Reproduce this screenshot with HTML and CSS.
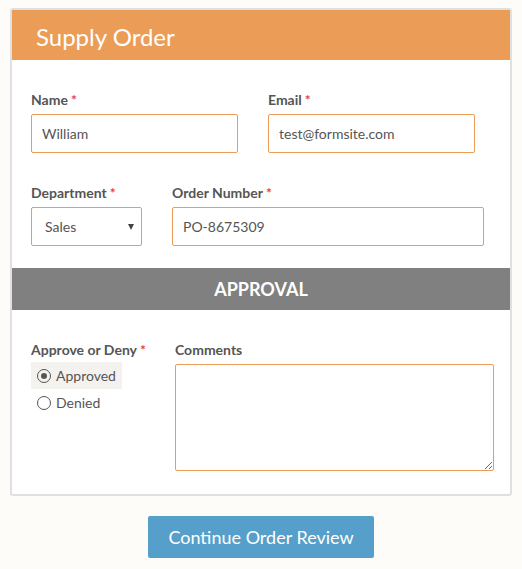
FILE: index.html
```html
<!DOCTYPE html>
<html lang="en">
<head>
    <meta charset="UTF-8">
    <meta name="viewport" content="width=device-width, initial-scale=1.0">
    <title>Supply Order</title>
    <link rel="stylesheet" href="styles.css">
</head>
<body>
    <form class="order-card">
        <h1 class="order-title">Supply Order</h1>

        <div class="order-fields">
            <div class="field-row">
                <div class="field field-name">
                    <label>Name<span class="req">*</span></label>
                    <input type="text" value="William">
                </div>
                <div class="field field-email">
                    <label>Email<span class="req">*</span></label>
                    <input type="text" value="test@formsite.com">
                </div>
            </div>
            <div class="field-row">
                <div class="field field-dept">
                    <label>Department<span class="req">*</span></label>
                    <div class="select-wrap">
                        <select>
                            <option>Sales</option>
                            <option>Marketing</option>
                            <option>Support</option>
                        </select>
                    </div>
                </div>
                <div class="field field-order">
                    <label>Order Number<span class="req">*</span></label>
                    <input type="text" value="PO-8675309">
                </div>
            </div>
        </div>

        <div class="section-bar">APPROVAL</div>

        <div class="approval-fields">
            <div class="field field-approve">
                <label>Approve or Deny<span class="req">*</span></label>
                <div class="radio-list">
                    <label class="radio-item selected"><input type="radio" name="approve" checked> Approved</label>
                    <label class="radio-item"><input type="radio" name="approve"> Denied</label>
                </div>
            </div>
            <div class="field field-comments">
                <label>Comments</label>
                <textarea></textarea>
            </div>
        </div>
    </form>

    <div class="actions">
        <button type="button" class="btn-continue">Continue Order Review</button>
    </div>
</body>
</html>
```

FILE: styles.css
```css
body {
    margin: 0;
    padding: 8px 10px;
    background: #fdfcf8;
    font-family: Lato, "Open Sans", sans-serif;
    color: #555;
}
.order-card {
    border: 2px solid #e0e0e0;
    border-radius: 3px;
    background: #fff;
}
.order-title {
    box-sizing: border-box;
    margin: 0;
    height: 50px;
    padding: 4px 0 0 24px;
    line-height: 46px;
    background: #eb9c56;
    color: #fff;
    font-size: 24px;
    font-weight: normal;
}
.order-fields {
    padding: 31px 19px 0;
    display: flex;
    flex-direction: column;
    gap: 31px;
}
.field-row {
    display: flex;
    gap: 30px;
}
.field label {
    display: block;
    font-size: 14px;
    font-weight: bold;
    line-height: 17px;
    margin-bottom: 6px;
}
.req {
    color: #e8413f;
    margin-left: 3px;
}
.field input[type="text"],
.field select,
.field textarea {
    box-sizing: border-box;
    width: 100%;
    height: 39px;
    border: 1px solid #eb9c56;
    border-radius: 2px;
    padding: 0 10px;
    font-family: inherit;
    font-size: 14px;
    color: #555;
    background: #fff;
    outline: none;
}
.field-name,
.field-email {
    width: 207px;
}
.field-dept {
    width: 111px;
}
.field-order {
    width: 312px;
}
.select-wrap {
    position: relative;
}
.field select {
    appearance: none;
    padding-left: 13px;
}
.select-wrap::after {
    content: "";
    position: absolute;
    right: 8px;
    top: 17px;
    border-left: 3px solid transparent;
    border-right: 3px solid transparent;
    border-top: 6px solid #444;
    pointer-events: none;
}
.section-bar {
    margin-top: 22px;
    height: 42px;
    line-height: 42px;
    background: #808080;
    color: #fff;
    text-align: center;
    font-size: 18px;
    font-weight: bold;
}
.approval-fields {
    display: flex;
    padding: 31px 16px 23px 19px;
}
.field-approve {
    width: 144px;
}
.field-comments {
    flex: 1;
}
.radio-list {
    margin-top: -2px;
}
.field .radio-item {
    display: flex;
    align-items: center;
    gap: 5px;
    width: 91px;
    height: 27px;
    margin: 0;
    padding-left: 6px;
    box-sizing: border-box;
    font-weight: normal;
    font-size: 14px;
}
.radio-item.selected {
    background: #f3f2ef;
}
.radio-item input {
    appearance: none;
    margin: 0;
    width: 14px;
    height: 14px;
    border: 1px solid #555;
    border-radius: 50%;
    display: grid;
    place-content: center;
}
.radio-item input:checked::before {
    content: "";
    width: 6px;
    height: 6px;
    border-radius: 50%;
    background: #555;
}
.field textarea {
    height: 107px;
    padding: 8px 10px;
    margin: 0;
    display: block;
}
.actions {
    display: flex;
    justify-content: center;
    padding-top: 20px;
}
.btn-continue {
    width: 226px;
    height: 42px;
    border: none;
    border-radius: 2px;
    background: #569fcb;
    color: #fff;
    font-family: inherit;
    font-size: 18px;
}
```
